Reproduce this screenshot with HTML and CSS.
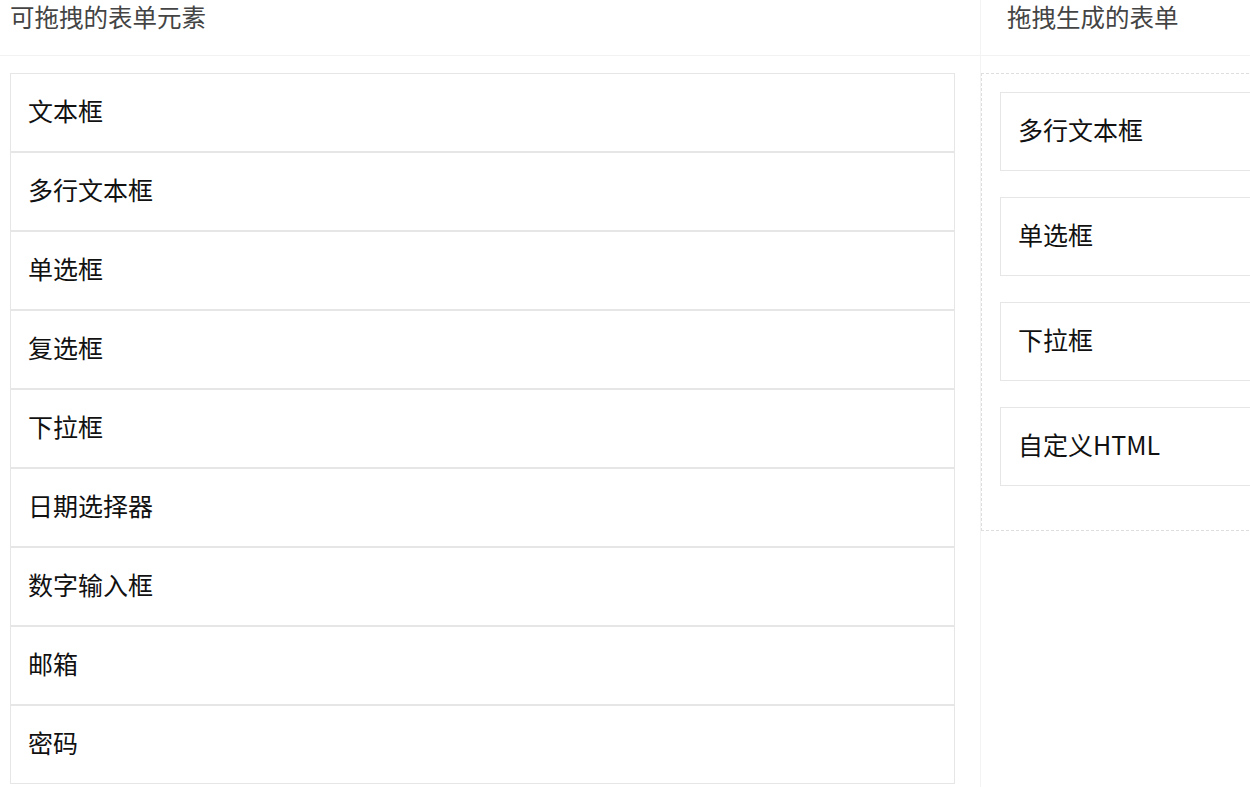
FILE: index.html
```html
<!DOCTYPE html>
<html lang="zh-CN">
<head>
<meta charset="utf-8">
<title>表单设计器</title>
<link rel="stylesheet" href="styles.css">
</head>
<body>
<div class="page">
  <section class="panel panel-left">
    <h2 class="panel-title">可拖拽的表单元素</h2>
    <ul class="source-list">
      <li class="source-item">文本框</li>
      <li class="source-item">多行文本框</li>
      <li class="source-item">单选框</li>
      <li class="source-item">复选框</li>
      <li class="source-item">下拉框</li>
      <li class="source-item">日期选择器</li>
      <li class="source-item">数字输入框</li>
      <li class="source-item">邮箱</li>
      <li class="source-item">密码</li>
    </ul>
  </section>
  <section class="panel panel-right">
    <h2 class="panel-title panel-title-right">拖拽生成的表单</h2>
    <div class="drop-zone">
      <div class="drop-item">多行文本框</div>
      <div class="drop-item">单选框</div>
      <div class="drop-item">下拉框</div>
      <div class="drop-item">自定义HTML</div>
    </div>
  </section>
</div>
</body>
</html>
```

FILE: styles.css
```css
html, body {
  margin: 0;
  padding: 0;
  overflow: hidden;
  background: #fff;
}
body {
  font-family: "Noto Sans CJK SC", "Noto Sans", sans-serif;
  color: #111;
  width: 1250px;
  height: 787px;
}
.page {
  display: flex;
  width: 1250px;
  height: 787px;
  overflow: hidden;
}
.panel-left {
  box-sizing: border-box;
  width: 981px;
  flex: none;
  border-right: 1px solid #f3f3f3;
}
.panel-right {
  flex: none;
  width: 269px;
}
.panel-title {
  margin: 0;
  box-sizing: border-box;
  height: 56px;
  padding: 0 10px;
  line-height: 34px;
  font-size: 24.5px;
  font-weight: normal;
  color: #444;
  border-bottom: 1px solid #f2f2f2;
  white-space: nowrap;
}
.panel-title-right {
  padding-left: 26px;
}
.source-list {
  list-style: none;
  margin: 17px 25px 0 10px;
  padding: 0;
}
.source-item {
  box-sizing: border-box;
  height: 79px;
  line-height: 73px;
  padding-left: 17px;
  border: 1px solid #e6e6e6;
  font-size: 25px;
  color: #111;
}
.drop-zone {
  margin-top: 17px;
  padding: 18px;
  width: 500px;
  border: 1px dashed #dedede;
}
.drop-item {
  box-sizing: border-box;
  height: 79px;
  line-height: 73px;
  padding-left: 17px;
  border: 1px solid #e6e6e6;
  font-size: 25px;
  color: #111;
  margin-bottom: 26px;
  white-space: nowrap;
}
```
